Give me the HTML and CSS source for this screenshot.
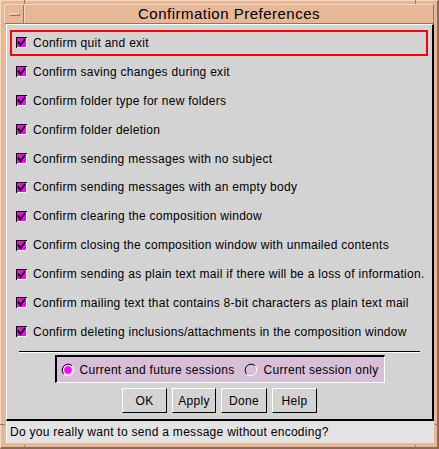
FILE: index.html
```html
<!DOCTYPE html>
<html>
<head>
<meta charset="utf-8">
<title>Confirmation Preferences</title>
<link rel="stylesheet" href="styles.css">
</head>
<body>
<div class="frame">
  <span class="tick tick-tl"></span>
  <span class="tick tick-tr"></span>
  <span class="tick tick-bl"></span>
  <span class="tick tick-br"></span>
  <span class="tick tick-lb"></span>
  <span class="tick tick-rb"></span>
  <div class="titlebar">
    <div class="menubtn"><span class="menubar"></span></div>
    <div class="title">Confirmation Preferences</div>
  </div>
  <div class="panel">
    <div class="list">
      <div class="row"><div class="item focus"><span class="cb"><svg width="11" height="11" viewBox="0 0 11 11"><rect x="0" y="0" width="11" height="11" fill="#ff00ff"/><path d="M0.5 11V0.5H11" fill="none" stroke="#000"/><path d="M1 10.5H10.5V1" fill="none" stroke="#fff"/><path d="M2 4.5L4.5 8L9 2" fill="none" stroke="#000" stroke-width="2"/></svg></span><span class="label">Confirm quit and exit</span></div></div>
      <div class="row"><div class="item"><span class="cb"><svg width="11" height="11" viewBox="0 0 11 11"><rect x="0" y="0" width="11" height="11" fill="#ff00ff"/><path d="M0.5 11V0.5H11" fill="none" stroke="#000"/><path d="M1 10.5H10.5V1" fill="none" stroke="#fff"/><path d="M2 4.5L4.5 8L9 2" fill="none" stroke="#000" stroke-width="2"/></svg></span><span class="label">Confirm saving changes during exit</span></div></div>
      <div class="row"><div class="item"><span class="cb"><svg width="11" height="11" viewBox="0 0 11 11"><rect x="0" y="0" width="11" height="11" fill="#ff00ff"/><path d="M0.5 11V0.5H11" fill="none" stroke="#000"/><path d="M1 10.5H10.5V1" fill="none" stroke="#fff"/><path d="M2 4.5L4.5 8L9 2" fill="none" stroke="#000" stroke-width="2"/></svg></span><span class="label">Confirm folder type for new folders</span></div></div>
      <div class="row"><div class="item"><span class="cb"><svg width="11" height="11" viewBox="0 0 11 11"><rect x="0" y="0" width="11" height="11" fill="#ff00ff"/><path d="M0.5 11V0.5H11" fill="none" stroke="#000"/><path d="M1 10.5H10.5V1" fill="none" stroke="#fff"/><path d="M2 4.5L4.5 8L9 2" fill="none" stroke="#000" stroke-width="2"/></svg></span><span class="label">Confirm folder deletion</span></div></div>
      <div class="row"><div class="item"><span class="cb"><svg width="11" height="11" viewBox="0 0 11 11"><rect x="0" y="0" width="11" height="11" fill="#ff00ff"/><path d="M0.5 11V0.5H11" fill="none" stroke="#000"/><path d="M1 10.5H10.5V1" fill="none" stroke="#fff"/><path d="M2 4.5L4.5 8L9 2" fill="none" stroke="#000" stroke-width="2"/></svg></span><span class="label">Confirm sending messages with no subject</span></div></div>
      <div class="row"><div class="item"><span class="cb"><svg width="11" height="11" viewBox="0 0 11 11"><rect x="0" y="0" width="11" height="11" fill="#ff00ff"/><path d="M0.5 11V0.5H11" fill="none" stroke="#000"/><path d="M1 10.5H10.5V1" fill="none" stroke="#fff"/><path d="M2 4.5L4.5 8L9 2" fill="none" stroke="#000" stroke-width="2"/></svg></span><span class="label">Confirm sending messages with an empty body</span></div></div>
      <div class="row"><div class="item"><span class="cb"><svg width="11" height="11" viewBox="0 0 11 11"><rect x="0" y="0" width="11" height="11" fill="#ff00ff"/><path d="M0.5 11V0.5H11" fill="none" stroke="#000"/><path d="M1 10.5H10.5V1" fill="none" stroke="#fff"/><path d="M2 4.5L4.5 8L9 2" fill="none" stroke="#000" stroke-width="2"/></svg></span><span class="label">Confirm clearing the composition window</span></div></div>
      <div class="row"><div class="item"><span class="cb"><svg width="11" height="11" viewBox="0 0 11 11"><rect x="0" y="0" width="11" height="11" fill="#ff00ff"/><path d="M0.5 11V0.5H11" fill="none" stroke="#000"/><path d="M1 10.5H10.5V1" fill="none" stroke="#fff"/><path d="M2 4.5L4.5 8L9 2" fill="none" stroke="#000" stroke-width="2"/></svg></span><span class="label">Confirm closing the composition window with unmailed contents</span></div></div>
      <div class="row"><div class="item"><span class="cb"><svg width="11" height="11" viewBox="0 0 11 11"><rect x="0" y="0" width="11" height="11" fill="#ff00ff"/><path d="M0.5 11V0.5H11" fill="none" stroke="#000"/><path d="M1 10.5H10.5V1" fill="none" stroke="#fff"/><path d="M2 4.5L4.5 8L9 2" fill="none" stroke="#000" stroke-width="2"/></svg></span><span class="label">Confirm sending as plain text mail if there will be a loss of information.</span></div></div>
      <div class="row"><div class="item"><span class="cb"><svg width="11" height="11" viewBox="0 0 11 11"><rect x="0" y="0" width="11" height="11" fill="#ff00ff"/><path d="M0.5 11V0.5H11" fill="none" stroke="#000"/><path d="M1 10.5H10.5V1" fill="none" stroke="#fff"/><path d="M2 4.5L4.5 8L9 2" fill="none" stroke="#000" stroke-width="2"/></svg></span><span class="label">Confirm mailing text that contains 8-bit characters as plain text mail</span></div></div>
      <div class="row"><div class="item"><span class="cb"><svg width="11" height="11" viewBox="0 0 11 11"><rect x="0" y="0" width="11" height="11" fill="#ff00ff"/><path d="M0.5 11V0.5H11" fill="none" stroke="#000"/><path d="M1 10.5H10.5V1" fill="none" stroke="#fff"/><path d="M2 4.5L4.5 8L9 2" fill="none" stroke="#000" stroke-width="2"/></svg></span><span class="label">Confirm deleting inclusions/attachments in the composition window</span></div></div>
    </div>
    <div class="sep"></div>
    <div class="radiobox">
      <span class="radio"><svg width="14" height="14" viewBox="0 0 14 14"><path d="M2.76 11.24A6 6 0 0 1 11.24 2.76" fill="none" stroke="#000"/><path d="M11.24 2.76A6 6 0 0 1 2.76 11.24" fill="none" stroke="#fff"/><circle cx="7" cy="7" r="4.3" fill="#ff00ff" stroke="#fff" stroke-width="0.8"/></svg><span class="rlabel">Current and future sessions</span></span>
      <span class="radio"><svg width="14" height="14" viewBox="0 0 14 14"><path d="M2.76 11.24A6 6 0 0 1 11.24 2.76" fill="none" stroke="#000"/><path d="M11.24 2.76A6 6 0 0 1 2.76 11.24" fill="none" stroke="#fff"/></svg><span class="rlabel">Current session only</span></span>
    </div>
    <div class="buttons">
      <button class="btn btn-ok">OK</button>
      <button class="btn btn-apply">Apply</button>
      <button class="btn btn-done">Done</button>
      <button class="btn btn-help">Help</button>
    </div>
  </div>
  <div class="status">Do you really want to send a message without encoding?</div>
</div>
</body>
</html>
```

FILE: styles.css
```css
* { box-sizing: border-box; }
html, body { margin: 0; padding: 0; background: #e6b898; }
body { font-family: "Liberation Sans", Arial, sans-serif; font-size: 12px; color: #000; }

.frame {
  position: relative;
  width: 439px;
  height: 449px;
  background: #e6b898;
  border-top: 1px solid #f6d8c0;
  border-left: 1px solid #f6d8c0;
  border-right: 2px solid #8c6a52;
  border-bottom: 2px solid #8c6a52;
  padding: 3px 3px 3px 5px;
  display: flex;
  flex-direction: column;
}

.tick { position: absolute; background: #9a7659; }
.tick-tl { left: 23px; top: -1px; width: 1px; height: 4px; }
.tick-tr { left: 414px; top: -1px; width: 1px; height: 4px; }
.tick-bl { left: 23px; bottom: -2px; width: 1px; height: 4px; }
.tick-br { left: 414px; bottom: -2px; width: 1px; height: 4px; }
.tick-lb { left: -1px; top: 423px; width: 5px; height: 1px; }
.tick-rb { right: -2px; top: 423px; width: 4px; height: 1px; }

.titlebar {
  height: 20px;
  margin-left: -2px;
  display: flex;
  border-top: 1px solid #f6d8c0;
  border-left: 1px solid #f6d8c0;
  border-bottom: 1px solid #9a7659;
  border-right: 1px solid #9a7659;
}
.menubtn {
  width: 19px;
  display: flex;
  align-items: center;
  justify-content: center;
  border-right: 1px solid #9a7659;
}
.menubar {
  display: block;
  width: 11px;
  height: 3px;
  border-top: 1px solid #f6d8c0;
  border-left: 1px solid #f6d8c0;
  border-bottom: 1px solid #9a7659;
  border-right: 1px solid #9a7659;
}
.title {
  flex: 1;
  text-align: center;
  font-size: 15px;
  line-height: 18px;
  letter-spacing: 0.5px;
  border-left: 1px solid #f6d8c0;
}

.panel {
  height: 397px;
  background: #d3d3d3;
  border-top: 1px solid #ffffff;
  border-left: 1px solid #ffffff;
  border-right: 2px solid #000;
  border-bottom: 2px solid #000;
  display: flex;
  flex-direction: column;
}

.list { padding-top: 3.5px; }
.row {
  height: 28.9px;
  display: flex;
  align-items: center;
}
.item {
  flex: 1;
  height: 26px;
  margin: 0 4px 0 3px;
  padding-left: 4px;
  border: 2px solid transparent;
  display: flex;
  align-items: center;
}
.item.focus { border-color: #ff0000; }
.cb { width: 11px; height: 11px; margin-right: 6px; display: block; }
.cb svg { display: block; }
.label { letter-spacing: 0.28px; white-space: nowrap; }

.sep {
  margin: 5px 12px 0 12px;
  border-top: 1px solid #000;
  border-bottom: 1px solid #fff;
}

.radiobox {
  align-self: center;
  width: 330px;
  height: 28px;
  margin-top: 2px;
  background: #d8bfd8;
  border-top: 2px solid #000;
  border-left: 2px solid #000;
  border-right: 1px solid #fff;
  border-bottom: 1px solid #fff;
  display: flex;
  align-items: center;
  padding-left: 4px;
  gap: 10px;
}
.radio { display: flex; align-items: center; }
.radio svg { display: block; margin-right: 5px; }
.rlabel { letter-spacing: 0.28px; }

.buttons {
  display: flex;
  justify-content: center;
  gap: 5px;
  margin-top: 5px;
}
.btn {
  height: 25px;
  padding: 0;
  font-family: "Liberation Sans", Arial, sans-serif;
  font-size: 12px;
  letter-spacing: 0.28px;
  color: #000;
  background: #d3d3d3;
  border-top: 1px solid #fff;
  border-left: 1px solid #fff;
  border-right: 1px solid #000;
  border-bottom: 1px solid #000;
  border-radius: 0;
}
.btn-ok { width: 45px; }
.btn-apply { width: 44px; }
.btn-done { width: 46px; }
.btn-help { width: 45px; }

.status {
  height: 22px;
  background: #e3e3e3;
  border-left: 1px solid #fff;
  padding-left: 3px;
  line-height: 22px;
  letter-spacing: 0.28px;
  white-space: nowrap;
}
```
